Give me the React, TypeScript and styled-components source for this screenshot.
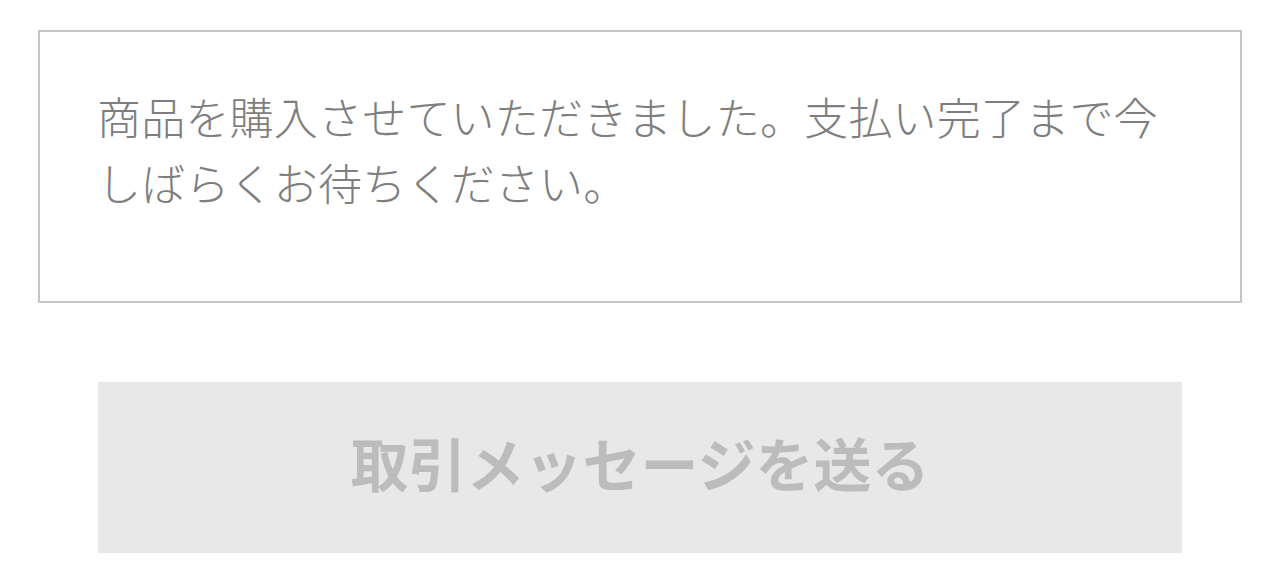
import React from "react";
import styled, { createGlobalStyle } from "styled-components";

const GlobalStyle = createGlobalStyle`
  html, body {
    margin: 0;
    padding: 0;
    background: #ffffff;
  }
  body {
    font-family: "Noto Sans CJK JP", "Noto Sans", sans-serif;
  }
`;

const Page = styled.div`
  display: flex;
  flex-direction: column;
  padding: 30px 38px 0 38px;
`;

const Notice = styled.div`
  border: 2px solid #c6c6c6;
  padding: 51px 56px 86px 57px;
`;

const NoticeText = styled.p`
  margin: 0;
  font-size: 44px;
  line-height: 66px;
  font-weight: 300;
  color: #7e7e7e;
  letter-spacing: 0.2px;
`;

const ActionRow = styled.div`
  display: flex;
  justify-content: center;
  padding: 79px 60px 0 60px;
`;

const SendButton = styled.button`
  flex: 1;
  height: 171px;
  padding: 0 0 12px 0;
  border: none;
  background: #e8e8e8;
  color: #bcbcbc;
  font-family: "Noto Sans CJK JP", "Noto Sans", sans-serif;
  font-size: 58px;
  font-weight: 700;
  cursor: not-allowed;
`;

export default function App() {
  return (
    <>
      <GlobalStyle />
      <Page>
        <Notice>
          <NoticeText>
            商品を購入させていただきました。支払い完了まで今しばらくお待ちください。
          </NoticeText>
        </Notice>
        <ActionRow>
          <SendButton disabled>取引メッセージを送る</SendButton>
        </ActionRow>
      </Page>
    </>
  );
}
